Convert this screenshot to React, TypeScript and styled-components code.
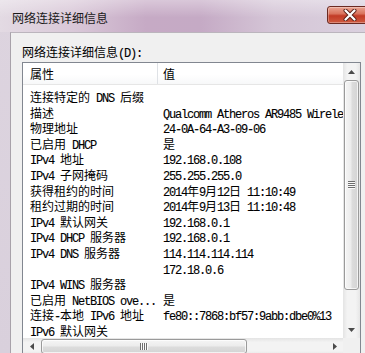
import React from 'react';
import styled, { createGlobalStyle } from 'styled-components';

const GlobalStyle = createGlobalStyle`
  html, body {
    margin: 0;
    padding: 0;
  }
  body {
    width: 365px;
    height: 353px;
    overflow: hidden;
    background: #dcd3de;
  }
`;

const Window = styled.div`
  width: 365px;
  height: 353px;
  display: flex;
  flex-direction: column;
  overflow: hidden;
  background: linear-gradient(180deg, #ddd4df 0%, #d9d0dc 100%);
  color: #000;
`;

const TitleBar = styled.div`
  height: 32px;
  flex: none;
  display: flex;
  align-items: flex-start;
  justify-content: space-between;
  padding-left: 12px;
  background: linear-gradient(180deg, rgba(255, 255, 255, 0.35), rgba(255, 255, 255, 0) 55%),
    linear-gradient(90deg, #e3dae3 0%, #d9c8d8 20%, #c6aac5 40%, #c5aac5 55%, #d5c6d7 75%, #dad0de 100%);
`;

const Title = styled.div`
  margin-top: 10px;
  font-family: 'Noto Sans CJK SC', sans-serif;
  font-size: 12px;
  line-height: 16px;
  color: #1a1a1a;
`;

const CloseButton = styled.div`
  margin-top: 6px;
  margin-right: -9px;
  width: 47px;
  height: 18px;
  box-sizing: border-box;
  border: 1px solid #6b2a22;
  border-radius: 3px;
  background: linear-gradient(180deg, #eba593 0%, #d9735d 42%, #c23b26 55%, #cf5a40 100%);
  box-shadow: inset 0 0 0 1px rgba(255, 255, 255, 0.3);
  display: flex;
  align-items: center;
  justify-content: center;
  padding-right: 2px;
`;

const Body = styled.div`
  flex: 1;
  min-height: 0;
  margin-left: 10px;
  overflow: hidden;
  background: #f0f0f0;
  border-left: 1px solid #a8a2aa;
  border-top: 1px solid #bbb5bd;
  padding: 11px 0 0 11px;
  display: flex;
  flex-direction: column;
`;

const Label = styled.div`
  height: 16px;
  line-height: 16px;
  margin-bottom: 2px;
  white-space: pre;
`;

const Han = styled.span`
  display: inline-block;
  height: 15px;
  line-height: 15px;
  font-family: 'Noto Sans CJK SC', sans-serif;
  font-size: 12px;
`;

const Latin = styled.span`
  display: inline-block;
  height: 15px;
  line-height: 15px;
  font-family: 'Liberation Mono', monospace;
  font-size: 12px;
  letter-spacing: -1.2px;
  -webkit-text-stroke: 0.12px #000;
`;

const HAN = /([\u3000-\u9fff\uff00-\uffef]+)/;

const Mixed: React.FC<{ text: string }> = ({ text }) => (
  <>
    {text
      .split(HAN)
      .filter(Boolean)
      .map((part, i) => (HAN.test(part) ? <Han key={i}>{part}</Han> : <Latin key={i}>{part}</Latin>))}
  </>
);

const ListBox = styled.div`
  flex: none;
  width: 339px;
  box-sizing: border-box;
  border: 1px solid #828790;
  background: #fff;
  display: grid;
  grid-template-columns: 320px 17px;
  grid-template-rows: 275px 17px;
`;

const Content = styled.div`
  overflow: hidden;
  display: flex;
  flex-direction: column;
`;

const Header = styled.div`
  height: 22px;
  flex: none;
  box-sizing: border-box;
  border-bottom: 1px solid #e6e6e6;
  background: linear-gradient(180deg, #fff 0%, #fff 55%, #f7f8f9 100%);
  display: grid;
  grid-template-columns: 135px 1fr;
`;

const HeaderCell = styled.div<{ $pad: number; $divider?: boolean }>`
  padding-left: ${(p) => p.$pad}px;
  line-height: 21px;
  border-right: ${(p) => (p.$divider ? '1px solid #dfe2e6' : 'none')};
  white-space: pre;
`;

const Rows = styled.div`
  padding-top: 4px;
`;

const Row = styled.div`
  height: 15.6px;
  display: grid;
  grid-template-columns: 135px minmax(0, 1fr);
  overflow: hidden;
`;

const Cell = styled.div<{ $pad: number }>`
  padding-left: ${(p) => p.$pad}px;
  line-height: 15.6px;
  height: 15.6px;
  white-space: pre;
  overflow: hidden;
`;

const VScroll = styled.div`
  display: flex;
  flex-direction: column;
  background: linear-gradient(90deg, #e4e4e4 0%, #f3f3f3 25%, #f3f3f3 75%, #e6e6e6 100%);
`;

const HScroll = styled.div`
  display: flex;
  background: linear-gradient(180deg, #e4e4e4 0%, #f3f3f3 25%, #f3f3f3 75%, #e6e6e6 100%);
`;

const Corner = styled.div`
  background: #f0f0f0;
`;

const Arrow = styled.div`
  width: 17px;
  height: 17px;
  flex: none;
  display: flex;
  align-items: center;
  justify-content: center;
`;

const Spacer = styled.div`
  flex: 1;
`;

const Thumb = styled.div<{ $vertical?: boolean }>`
  flex: none;
  box-sizing: border-box;
  border: 1px solid #9a9a9a;
  border-radius: 3px;
  display: flex;
  align-items: center;
  justify-content: center;
  ${(p) =>
    p.$vertical
      ? `height: 210px; margin: 0 1px;
         background: linear-gradient(90deg, #f5f5f5 0%, #ececec 45%, #dcdcdc 55%, #d4d4d4 100%);`
      : `width: 206px; margin: 1px 0 1px 1px;
         background: linear-gradient(180deg, #f5f5f5 0%, #ececec 45%, #dcdcdc 55%, #d4d4d4 100%);`}
  box-shadow: inset 0 0 0 1px rgba(255, 255, 255, 0.7);
`;

const Grip = styled.div<{ $vertical?: boolean }>`
  ${(p) =>
    p.$vertical
      ? `width: 7px; height: 8px;
         background: repeating-linear-gradient(180deg, #6e6e6e 0 1px, #fafafa 1px 2px);`
      : `width: 8px; height: 7px;
         background: repeating-linear-gradient(90deg, #6e6e6e 0 1px, #fafafa 1px 2px);`}
`;

const Tri: React.FC<{ dir: 'up' | 'down' | 'left' | 'right' }> = ({ dir }) => {
  const pts = {
    up: '0,4 3.5,0 7,4',
    down: '0,0 3.5,4 7,0',
    left: '4,0 0,3.5 4,7',
    right: '0,0 4,3.5 0,7',
  }[dir];
  const vert = dir === 'up' || dir === 'down';
  return (
    <svg width={vert ? 7 : 4} height={vert ? 4 : 7} viewBox={vert ? '0 0 7 4' : '0 0 4 7'}>
      <polygon points={pts} fill="#4a4a4a" />
    </svg>
  );
};

const rows: [string, string][] = [
  ['连接特定的 DNS 后缀', ''],
  ['描述', 'Qualcomm Atheros AR9485 Wireless Network Adapter'],
  ['物理地址', '24-0A-64-A3-09-06'],
  ['已启用 DHCP', '是'],
  ['IPv4 地址', '192.168.0.108'],
  ['IPv4 子网掩码', '255.255.255.0'],
  ['获得租约的时间', '2014年9月12日 11:10:49'],
  ['租约过期的时间', '2014年9月13日 11:10:48'],
  ['IPv4 默认网关', '192.168.0.1'],
  ['IPv4 DHCP 服务器', '192.168.0.1'],
  ['IPv4 DNS 服务器', '114.114.114.114'],
  ['', '172.18.0.6'],
  ['IPv4 WINS 服务器', ''],
  ['已启用 NetBIOS ove...', '是'],
  ['连接-本地 IPv6 地址', 'fe80::7868:bf57:9abb:dbe0%13'],
  ['IPv6 默认网关', ''],
];

const App: React.FC = () => (
  <>
    <GlobalStyle />
    <Window>
      <TitleBar>
        <Title>网络连接详细信息</Title>
        <CloseButton>
          <svg width="14" height="12" viewBox="0 0 14 12">
            <path d="M2.5 1.5 L11.5 10.5 M11.5 1.5 L2.5 10.5" stroke="#5a2018" strokeWidth="4" strokeLinecap="round" />
            <path d="M2.5 1.5 L11.5 10.5 M11.5 1.5 L2.5 10.5" stroke="#fff" strokeWidth="2.2" strokeLinecap="round" />
          </svg>
        </CloseButton>
      </TitleBar>
      <Body>
        <Label>
          <Mixed text="网络连接详细信息(D):" />
        </Label>
        <ListBox>
          <Content>
            <Header>
              <HeaderCell $pad={7} $divider>
                <Han>属性</Han>
              </HeaderCell>
              <HeaderCell $pad={5}>
                <Han>值</Han>
              </HeaderCell>
            </Header>
            <Rows>
              {rows.map(([name, value], i) => (
                <Row key={i}>
                  <Cell $pad={7}>
                    <Mixed text={name} />
                  </Cell>
                  <Cell $pad={5}>
                    <Mixed text={value} />
                  </Cell>
                </Row>
              ))}
            </Rows>
          </Content>
          <VScroll>
            <Arrow>
              <Tri dir="up" />
            </Arrow>
            <Thumb $vertical>
              <Grip $vertical />
            </Thumb>
            <Spacer />
            <Arrow>
              <Tri dir="down" />
            </Arrow>
          </VScroll>
          <HScroll>
            <Arrow>
              <Tri dir="left" />
            </Arrow>
            <Thumb>
              <Grip />
            </Thumb>
            <Spacer />
            <Arrow>
              <Tri dir="right" />
            </Arrow>
          </HScroll>
          <Corner />
        </ListBox>
      </Body>
    </Window>
  </>
);

export default App;
